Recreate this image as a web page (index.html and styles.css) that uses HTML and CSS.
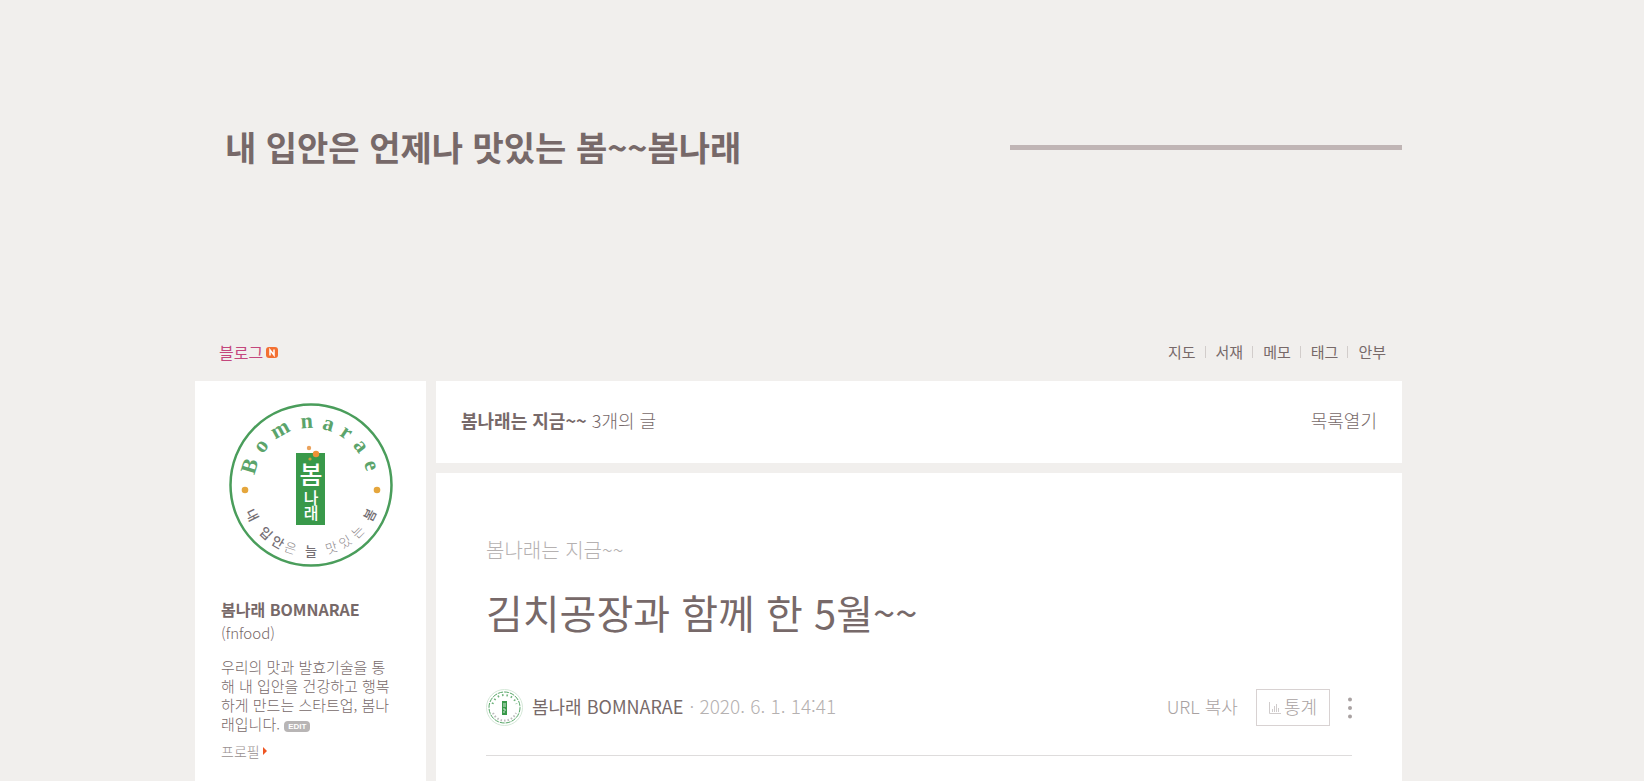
FILE: index.html
```html
<!DOCTYPE html>
<html lang="ko">
<head>
    <meta charset="UTF-8">
    <meta name="viewport" content="width=device-width, initial-scale=1.0">
    <title>내 입안은 언제나 맛있는 봄~~봄나래</title>
    <link rel="stylesheet" href="styles.css">
</head>
<body>
    <div class="container">
        <header class="header">
            <h1>내 입안은 언제나 맛있는 봄~~봄나래</h1>
            <div class="header-line"></div>
        </header>

        <nav class="menu">
            <a class="menu-blog" href="#">블로그
                <svg class="new-icon" viewBox="0 0 12 11" aria-hidden="true">
                    <rect width="12" height="11" rx="3" fill="#f37032"/>
                    <path d="M4 8.5V3L8 8V2.5" fill="none" stroke="#fff" stroke-width="1.5"/>
                </svg>
            </a>
            <ul class="menu-list">
                <li><a href="#">지도</a></li>
                <li><a href="#">서재</a></li>
                <li><a href="#">메모</a></li>
                <li><a href="#">태그</a></li>
                <li><a href="#">안부</a></li>
            </ul>
        </nav>

        <div class="layout">
            <aside class="sidebar">
                <svg class="logo" viewBox="-82 -82 164 164" role="img" aria-label="Bomnarae">
                    <circle r="80.5" fill="#fff" stroke="#4a9d5b" stroke-width="2.5"/>
                    <g class="logo-en">
                        <text y="-57" transform="rotate(-73)">B</text>
                        <text y="-57" transform="rotate(-52)">o</text>
                        <text y="-57" transform="rotate(-29)">m</text>
                        <text y="-57" transform="rotate(-4)">n</text>
                        <text y="-57" transform="rotate(16)">a</text>
                        <text y="-57" transform="rotate(34)">r</text>
                        <text y="-57" transform="rotate(52)">a</text>
                        <text y="-57" transform="rotate(72)">e</text>
                    </g>
                    <g class="logo-ko">
                        <text y="71" transform="rotate(63)">내</text>
                        <text y="71" transform="rotate(43)">입</text>
                        <text y="71" transform="rotate(30)">안</text>
                        <text class="thin" y="71" transform="rotate(18)">은</text>
                        <text y="71">늘</text>
                        <text class="thin" y="71" transform="rotate(-18)">맛</text>
                        <text class="thin" y="71" transform="rotate(-31)">있</text>
                        <text class="thin" y="71" transform="rotate(-45)">는</text>
                        <text y="71" transform="rotate(-63)">봄</text>
                    </g>
                    <rect x="-15" y="-32" width="29" height="72" fill="#39994a"/>
                    <g class="logo-mark">
                        <text class="big" x="0" y="-1">봄</text>
                        <text x="0" y="19">나</text>
                        <text x="0" y="34">래</text>
                    </g>
                    <g fill="#e5a63c">
                        <circle cx="-66" cy="5" r="3.3"/>
                        <circle cx="66" cy="5" r="3.3"/>
                        <circle cx="-2" cy="-37" r="2.2" fill="#eba25c"/>
                        <circle cx="5" cy="-31" r="3.2" fill="#ee9136"/>
                        <circle cx="-1" cy="-26" r="1.6" fill="#c9a03c"/>
                    </g>
                </svg>
                <strong class="nickname">봄나래 BOMNARAE</strong>
                <span class="user-id">(fnfood)</span>
                <p class="intro">우리의 맛과 발효기술을 통<br>해 내 입안을 건강하고 행복<br>하게 만드는 스타트업, 봄나<br>래입니다. <a class="edit" href="#">EDIT</a></p>
                <a class="profile" href="#">프로필</a>
            </aside>

            <main class="main">
                <section class="category">
                    <p><strong>봄나래는 지금~~</strong> 3개의 글</p>
                    <button type="button">목록열기</button>
                </section>

                <article class="post">
                    <a class="post-category" href="#">봄나래는 지금~~</a>
                    <h2>김치공장과 함께 한 5월~~</h2>
                    <div class="post-info">
                        <svg class="avatar" viewBox="0 0 37 37" aria-hidden="true">
                            <circle cx="18.5" cy="18.5" r="18" fill="#fff" stroke="#d5e8d8"/>
                            <circle cx="18.5" cy="18.5" r="15.5" fill="none" stroke="#55a565" stroke-dasharray="5 1"/>
                            <path d="M6.5 15A12.5 12.5 0 0 1 30.5 15" fill="none" stroke="#6fb27c" stroke-width="2" stroke-dasharray="1.5 3"/>
                            <path d="M7 24A12.5 12.5 0 0 0 30 24" fill="none" stroke="#bbb" stroke-width="2" stroke-dasharray="1.5 2"/>
                            <rect x="16" y="12" width="5" height="14" fill="#39994a"/>
                            <path d="M17 15h3M17 17h3M18 19v2h2M17 23h2" fill="none" stroke="#cfe8d3"/>
                        </svg>
                        <a class="author" href="#">봄나래 BOMNARAE</a>
                        <span class="date">· 2020. 6. 1. 14:41</span>
                        <div class="post-tools">
                            <button class="copy" type="button">URL 복사</button>
                            <button class="stats" type="button">
                                <svg viewBox="0 0 12 12" aria-hidden="true">
                                    <path d="M.5 0v11.5H12M3.5 7v3M5.5 4v6M7.5 2v8M9.5 6v4" fill="none" stroke="#d0cccc"/>
                                </svg>
                                <span>통계</span>
                            </button>
                            <button class="more" type="button" aria-label="더보기">
                                <svg viewBox="0 0 4 22" aria-hidden="true" fill="#a9a2a2">
                                    <circle cx="2" cy="2.5" r="2"/>
                                    <circle cx="2" cy="11" r="2"/>
                                    <circle cx="2" cy="19.5" r="2"/>
                                </svg>
                            </button>
                        </div>
                    </div>
                </article>
            </main>
        </div>
    </div>
</body>
</html>
```
FILE: styles.css
```css
* {
    margin: 0;
    padding: 0;
    box-sizing: border-box;
}

body {
    font-family: 'Noto Sans CJK KR', sans-serif;
    font-weight: 300;
    background-color: #f1efed;
    color: #776969;
    min-height: 100vh;
    padding-right: 47px;
}

a {
    color: inherit;
    text-decoration: none;
}

button {
    font: inherit;
    color: inherit;
    background: none;
    border: none;
    cursor: pointer;
}

.container {
    display: flex;
    flex-direction: column;
    max-width: 1207px;
    min-height: 100vh;
    margin: 0 auto;
}

/* Header */
.header {
    display: flex;
    align-items: center;
    justify-content: space-between;
    padding: 122px 0 148px 30px;
}

.header h1 {
    font-size: 34px;
    font-weight: 700;
    line-height: 50px;
}

.header-line {
    width: 392px;
    height: 5px;
    background: #c0b5b5;
}

/* Menu */
.menu {
    display: flex;
    align-items: center;
    justify-content: space-between;
    padding: 20px 16px 17px 24px;
    font-size: 15px;
    font-weight: 400;
    line-height: 24px;
}

.menu-blog {
    display: flex;
    align-items: center;
    gap: 3px;
    font-size: 16px;
    color: #c4477d;
}

.new-icon {
    width: 12px;
    height: 11px;
}

.menu-list {
    display: flex;
    list-style: none;
}

.menu-list li {
    display: flex;
    align-items: center;
}

.menu-list li + li::before {
    content: '';
    width: 1px;
    height: 12px;
    margin: 0 10px 0 9px;
    background: #d2cdcb;
}

/* Columns */
.layout {
    display: flex;
    flex: 1;
    gap: 10px;
}

.sidebar {
    display: flex;
    flex-direction: column;
    align-items: flex-start;
    flex: 0 0 231px;
    padding: 22px 26px;
    background: #fff;
    font-size: 15px;
}

.main {
    display: flex;
    flex-direction: column;
    flex: 1;
    gap: 10px;
}

/* Profile */
.logo {
    width: 164px;
    height: 164px;
    margin-left: 8px;
    margin-bottom: 30px;
    flex-shrink: 0;
}

.logo text {
    text-anchor: middle;
}

.logo-en {
    font-family: 'Liberation Serif', serif;
    font-size: 22px;
    font-weight: 700;
    fill: #5ba46b;
}

.logo-ko {
    font-size: 13px;
    font-weight: 500;
    fill: #746e73;
}

.logo-ko .thin {
    font-weight: 300;
    fill: #8d888c;
}

.logo-mark {
    font-size: 16px;
    font-weight: 500;
    fill: #fff;
}

.logo-mark .big {
    font-size: 25px;
}

.nickname {
    font-size: 16px;
    font-weight: 700;
    line-height: 24px;
}

.user-id {
    line-height: 24px;
}

.intro {
    margin-top: 12px;
    line-height: 19px;
    white-space: nowrap;
}

.edit {
    display: inline-block;
    padding: 0 4px;
    border-radius: 4px;
    background: #b8b5b5;
    color: #fff;
    font-family: 'Liberation Sans', sans-serif;
    font-size: 8px;
    font-weight: 700;
    line-height: 11px;
    vertical-align: 1px;
}

.profile {
    display: flex;
    align-items: center;
    gap: 3px;
    margin-top: 8px;
    color: #999090;
    font-size: 14px;
    line-height: 20px;
}

.profile::after {
    content: '';
    border: 4px solid transparent;
    border-left-color: #ee5522;
    border-right: none;
}

/* Category bar */
.category {
    display: flex;
    align-items: center;
    justify-content: space-between;
    height: 82px;
    padding: 0 25px 4px;
    background: #fff;
    font-size: 18px;
}

.category strong {
    font-weight: 700;
}

/* Post */
.post {
    flex: 1;
    padding: 63px 50px 0;
    background: #fff;
}

.post-category {
    display: block;
    color: #b5b1b1;
    font-size: 20px;
    line-height: 28px;
}

.post h2 {
    margin-top: 19px;
    font-size: 40px;
    font-weight: 400;
    line-height: 58px;
}

.post-info {
    display: flex;
    align-items: center;
    margin-top: 48px;
    padding-bottom: 29px;
    border-bottom: 1px solid #dedcdc;
    font-size: 18px;
    line-height: 26px;
}

.avatar {
    width: 37px;
    height: 37px;
    margin-right: 9px;
}

.author,
.date,
.copy,
.stats span {
    padding-bottom: 3px;
}

.author {
    font-weight: 400;
}

.date {
    margin-left: 6px;
    color: #b5b1b1;
    font-size: 19px;
}

.post-tools {
    display: flex;
    align-items: center;
    gap: 18px;
    margin-left: auto;
    color: #a9a2a2;
}

.stats {
    display: flex;
    align-items: center;
    gap: 3px;
    height: 37px;
    padding: 0 12px;
    border: 1px solid #d8d2d2;
}

.stats svg {
    width: 12px;
    height: 12px;
}

.more {
    display: flex;
}

.more svg {
    width: 4px;
    height: 22px;
}
```
